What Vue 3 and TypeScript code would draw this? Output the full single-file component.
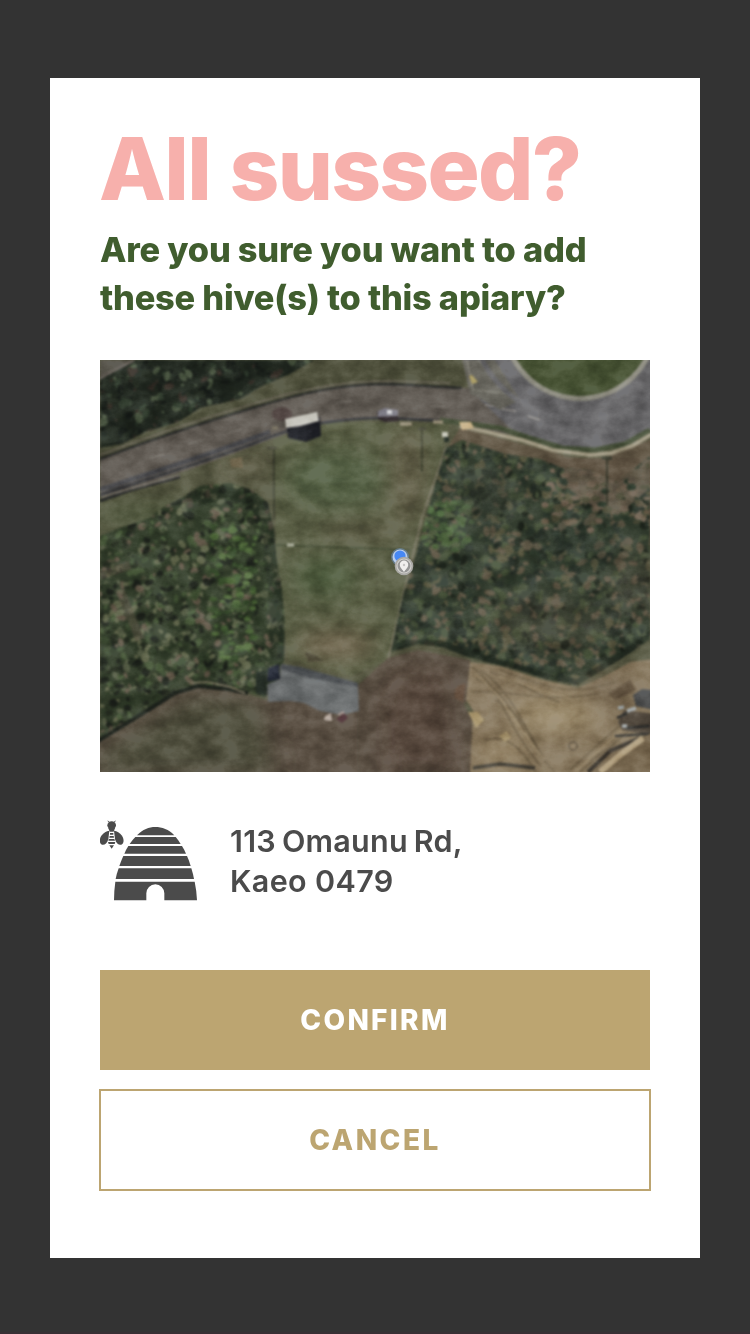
<script setup lang="ts">
interface Blob {
  x: number
  y: number
  rx: number
  ry: number
  a: number
  fill: string
}

function seeded(seed: number): () => number {
  let s = seed
  return () => {
    s = (s * 16807) % 2147483647
    return s / 2147483647
  }
}

function scatter(
  seed: number, count: number,
  x0: number, y0: number, x1: number, y1: number,
  rMin: number, rMax: number, colours: string[],
): Blob[] {
  const rnd = seeded(seed)
  return Array.from({ length: count }, () => {
    const r = rMin + rnd() * (rMax - rMin)
    return {
      x: Math.round((x0 + rnd() * (x1 - x0)) * 10) / 10,
      y: Math.round((y0 + rnd() * (y1 - y0)) * 10) / 10,
      rx: Math.round(r * 10) / 10,
      ry: Math.round(r * (0.45 + rnd() * 0.45) * 10) / 10,
      a: Math.round(rnd() * 180),
      fill: colours[Math.floor(rnd() * colours.length)],
    }
  })
}

const topTrees = scatter(77, 420, 0, 0, 215, 90, 1.5, 6, ['#1b211c', '#161b18', '#272f26', '#2f3b2e', '#20271f', '#332d27', '#46523f', '#181d19'])
const leftTrees = scatter(991, 1500, 0, 120, 190, 382, 1.5, 5.2, ['#262d22', '#2d3927', '#445538', '#545c46', '#3c4b33', '#5e5547', '#1d221c', '#5f654c', '#36402e', '#20261f'])
const rightTrees = scatter(4242, 1900, 290, 82, 555, 330, 1.8, 5.8, ['#2d382e', '#344032', '#445039', '#55543f', '#2c352d', '#5a5343', '#46513c', '#20271f', '#5e5747', '#272f28'])
const scrub = scatter(551, 120, 445, 88, 550, 170, 1.5, 5, ['#2b372b', '#6b5e4f', '#675b4d', '#4a4a38', '#625746'])
const brightLeft = scatter(314, 110, 112, 165, 156, 300, 1.5, 4.5, ['#405833', '#4a6338', '#364a2d', '#526b3f'])
const brightRight = scatter(629, 110, 322, 142, 372, 190, 1.5, 4.5, ['#4a603c', '#415538', '#567048', '#505c42'])
</script>

<template>
  <main class="screen">
    <section class="card">
      <h1 class="title">All sussed?</h1>
      <p class="question">
        <span class="line q1">Are you sure you want to add</span>
        <span class="line q2">these hive(s) to this apiary?</span>
      </p>

      <svg class="map" viewBox="0 0 550 412" preserveAspectRatio="none">
        <defs>
          <filter id="soft" x="0" y="0" width="100%" height="100%" color-interpolation-filters="sRGB"><feGaussianBlur stdDeviation="0.8" /></filter>
          <filter id="haze" x="-30%" y="-30%" width="160%" height="160%" color-interpolation-filters="sRGB"><feGaussianBlur stdDeviation="11" /></filter>
          <filter id="grain" x="0" y="0" width="100%" height="100%" color-interpolation-filters="sRGB">
            <feTurbulence type="fractalNoise" baseFrequency="0.043 0.057" numOctaves="5" seed="8" />
            <feColorMatrix type="matrix" values="1.8 0 0 0 -0.25  1.8 0 0 0 -0.27  1.8 0 0 0 -0.3  0 0 0 0 1" />
          </filter>
          <clipPath id="cTop"><path d="M0 0H214L190 14 162 26 140 39 100 48 78 62 45 72 22 84 0 88Z" /></clipPath>
          <clipPath id="cLeft"><path d="M0 176 20 168 50 158 62 148 85 136 100 126 130 123 152 130 168 143 174 170 176 196 182 230 185 265 184 300 178 318 165 338 148 332 126 327 98 325 75 334 45 353 0 382Z" /></clipPath>
          <clipPath id="cRight"><path d="M346 88 362 80 405 94 440 99 462 108 490 110 518 122 550 96V279L530 293 498 313 478 325 445 319 420 310 395 304 368 297 342 287 318 284 291 292 303 236 316 196 328 150Z" /></clipPath>
        </defs>
        <g filter="url(#soft)">
          <rect x="-5" y="-5" width="560" height="422" fill="#545642" />

          <path d="M0 88 80 62 210 0H370V26L230 26 130 54 0 98Z" fill="#4b4d3a" />
          <path d="M0 0H60L20 18 0 24Z" fill="#4f4c43" />
          <g clip-path="url(#cTop)">
            <rect width="220" height="90" fill="#202720" />
            <ellipse v-for="(b, i) in topTrees" :key="i" :cx="b.x" :cy="b.y" :rx="b.rx" :ry="b.ry" :fill="b.fill" :transform="`rotate(${b.a} ${b.x} ${b.y})`" />
          </g>
          <path d="M0 0H34L0 18Z" fill="#4c4a42" />
          <path d="M0 18 34 0" stroke="#5c5751" stroke-width="3" />

          <!-- centre paddock -->
          <path d="M174 80 230 62 350 64 326 150 303 240 288 300 250 316 188 300 184 260 176 190Z" fill="#565b43" />
          <g filter="url(#haze)" opacity=".85">
            <ellipse cx="235" cy="120" rx="50" ry="30" fill="#505e43" />
            <ellipse cx="225" cy="217" rx="34" ry="20" fill="#4a5a3d" />
            <ellipse cx="308" cy="115" rx="18" ry="50" fill="#645f4b" />
            <ellipse cx="262" cy="172" rx="48" ry="9" fill="#5f5c48" />
            <ellipse cx="236" cy="285" rx="40" ry="14" fill="#766853" />
            <ellipse cx="50" cy="155" rx="60" ry="10" fill="#4b573c" />
            <ellipse cx="145" cy="106" rx="30" ry="8" fill="#5e5a46" />
          </g>
          <path d="M176 185 255 188 310 190" stroke="#3a432f" stroke-width="1.5" fill="none" />
          <path d="M174 90V160M322 67V112" stroke="#373b2e" stroke-width="1.5" />
          <path d="M167 88H177M318 69H326" stroke="#494a3e" stroke-width="2" />
          <path d="M346 88 322 157 304 232 288 300" stroke="#74715f" stroke-width="2" fill="none" />
          <path d="M187 185H194" stroke="#a5a896" stroke-width="3" />

          <!-- road -->
          <path d="M0 99C50 80 120 57 180 40 220 29 250 24 290 24L370 28 440 80 345 62C275 54 225 59 180 76 110 103 50 124 0 138Z" fill="#5d5852" />
          <path d="M0 99C50 80 120 57 180 40 220 29 250 24 290 24L362 28" stroke="#2c2e2d" stroke-width="2.3" fill="none" />
          <path d="M0 95C50 76 120 53 180 36 220 26 250 21 290 21L350 23" stroke="#696459" stroke-width="1.5" fill="none" />
          <path d="M0 135C60 115 120 97 170 77 205 64 240 58 285 58L345 61" stroke="#34363a" stroke-width="2.6" fill="none" />
          <path d="M0 130C60 110 120 91 170 72" stroke="#45464a" stroke-width="5" fill="none" />
          <path d="M0 141 28 131 80 117" stroke="#26282a" stroke-width="2.5" fill="none" />
          <path d="M2 137 80 115" stroke="#716d65" stroke-width="2" />
          <path d="M50 98 65 94M88 84 103 80M128 73 142 69M235 43 252 41M330 46 345 47" stroke="#77736d" stroke-width="1.4" />

          <!-- roundabout -->
          <path d="M362 -4H554V68C535 80 515 88 490 89 455 88 428 79 410 68L375 35Z" fill="#626265" />
          <path d="M362 0H395L420 40 400 50 370 33Z" fill="#67665f" />
          <path d="M367 0 373 30 404 33 380 0M378 0 404 33" stroke="#85847b" stroke-width="1.6" fill="none" />
          <path d="M369 16 372 24 378 22 372 15Z" fill="#a89a62" />
          <path d="M382 0C400 35 435 58 480 60 515 59 535 48 550 34" stroke="#68686b" stroke-width="5" fill="none" />
          <circle cx="480" cy="-37" r="78" fill="#8c8b80" />
          <circle cx="480" cy="-37" r="73" fill="#424e31" />
          <path d="M402 49 416 51M428 56 440 60M385 45 394 46" stroke="#94918d" stroke-width="1.5" />
          <path d="M340 60 400 68 430 78 462 88 495 90 525 84 550 70" stroke="#414b36" stroke-width="5" fill="none" />

          <path d="M360 68 392 76 430 86 470 97 500 99 554 78V106L400 110 346 90Z" fill="#5f5545" />
          <path d="M360 66 392 73 425 81 452 90 490 95 512 93 532 86 552 74" stroke="#9d9681" stroke-width="4" fill="none" />
          <path d="M359 62H371L374 68 362 70Z" fill="#c3ac82" />
          <path d="M300 64H312M333 62H343" stroke="#9a937e" stroke-width="3.5" />
          <path d="M172 68H178" stroke="#76705f" stroke-width="3" />

          <!-- bush on both sides -->
          <g clip-path="url(#cLeft)">
            <rect y="110" width="200" height="280" fill="#303b2a" />
            <ellipse v-for="(b, i) in leftTrees" :key="i" :cx="b.x" :cy="b.y" :rx="b.rx" :ry="b.ry" :fill="b.fill" :transform="`rotate(${b.a} ${b.x} ${b.y})`" />
            <ellipse v-for="(b, i) in brightLeft" :key="`l${i}`" :cx="b.x" :cy="b.y" :rx="b.rx" :ry="b.ry" :fill="b.fill" />
            <path d="M85 145 120 132 150 138 168 160 176 240 178 300" stroke="#1f251e" stroke-width="14" fill="none" opacity=".4" />
            <path d="M0 215 30 205M20 230 40 280" stroke="#574d42" stroke-width="9" opacity=".45" />
          </g>
          <path d="M444 98H554V180H510L470 130Z" fill="#5c5142" />
          <g clip-path="url(#cRight)">
            <rect x="285" y="80" width="270" height="250" fill="#343e31" />
            <ellipse v-for="(b, i) in rightTrees" :key="i" :cx="b.x" :cy="b.y" :rx="b.rx" :ry="b.ry" :fill="b.fill" :transform="`rotate(${b.a} ${b.x} ${b.y})`" />
            <ellipse v-for="(b, i) in brightRight" :key="`r${i}`" :cx="b.x" :cy="b.y" :rx="b.rx" :ry="b.ry" :fill="b.fill" />
            <g filter="url(#haze)">
              <ellipse cx="388" cy="135" rx="28" ry="28" fill="#343b30" opacity=".6" />
              <ellipse cx="480" cy="180" rx="45" ry="24" fill="#252f29" opacity=".4" />
              <ellipse cx="450" cy="262" rx="60" ry="28" fill="#544d40" opacity=".3" />
              <ellipse cx="540" cy="225" rx="30" ry="30" fill="#5a5042" opacity=".3" />
            </g>
            <path d="M462 104 550 92V128L518 155 495 148 470 130Z" fill="#63584a" opacity=".8" />
            <ellipse v-for="(b, i) in scrub" :key="`s${i}`" :cx="b.x" :cy="b.y" :rx="b.rx" :ry="b.ry" :fill="b.fill" />
            <path d="M300 285 340 286 375 298 410 307 442 318 478 325 510 305 550 279" stroke="#1f271f" stroke-width="11" fill="none" opacity=".65" />
          </g>
          <path d="M507 98V146" stroke="#303329" stroke-width="1.8" />
          <path d="M502 98H512" stroke="#383b30" stroke-width="3" />
          <rect x="342" y="72" width="6" height="5" fill="#c5c6b9" />
          <rect x="344" y="77" width="5" height="5" fill="#222c25" />

          <!-- bare ground -->
          <path d="M-4 382 45 353 75 334 98 325 126 329 165 340 205 335 258 325 288 298 318 290 370 300 374 330 364 345 372 360 374 416H-4Z" fill="#564c41" />
          <g filter="url(#haze)">
            <path d="M-4 394 90 336 160 340 175 416H-4Z" fill="#4b4b3b" />
            <path d="M300 310 350 310 350 345 360 412H280V340Z" fill="#54463c" />
          </g>
          <path d="M-4 382 45 352 75 333 98 326 128 329 148 333" stroke="#1c211c" stroke-width="4" fill="none" />
          <path d="M90 323 108 322 130 327 145 333" stroke="#77705c" stroke-width="1.5" fill="none" />
          <path d="M370 302 400 306 440 319 478 328 505 316 530 302 554 299V416H370L373 350 366 340Z" fill="#83745c" />
          <g filter="url(#haze)">
            <ellipse cx="455" cy="355" rx="44" ry="18" fill="#978769" />
            <ellipse cx="402" cy="392" rx="26" ry="12" fill="#958467" />
            <ellipse cx="510" cy="330" rx="26" ry="12" fill="#6e604c" />
          </g>
          <path d="M372 307C400 325 405 365 440 405M380 310C412 330 425 370 447 403M390 312C424 322 430 334 460 342M372 332C400 328 445 345 500 333M395 340C430 355 430 390 455 412M470 410 520 365M480 412 530 370M490 400 515 384M376 318C400 330 410 345 425 372M400 310C440 325 470 338 515 322M385 380C410 372 425 395 436 412" stroke="#625541" stroke-width="1.5" fill="none" opacity=".75" />
          <path d="M375 315C405 335 412 362 445 400M398 316C430 325 440 332 470 338M475 412 525 367" stroke="#9c8c6f" stroke-width="1.4" fill="none" opacity=".8" />
          <path d="M368 352 378 352 384 360 376 368Z" fill="#a8966f" />
          <path d="M399 376 407 371 411 378 405 382Z" fill="#a59470" />
          <path d="M508 333 530 320 536 330 515 340Z" fill="#635543" />
          <path d="M533 335 542 329 554 330V350L536 346Z" fill="#464849" />
          <path d="M518 362 524 350 554 354V376L522 370Z" fill="#51493f" />
          <path d="M517 358 527 353M526 368 550 366M515 376 550 374" stroke="#272a2b" stroke-width="2" />
          <path d="M518 348 524 347M522 366 527 366M527 351 536 348" stroke="#a9afb0" stroke-width="3.5" />
          <path d="M488 412 509 391 554 372V416H488Z" fill="#75664f" />
          <path d="M488 412 510 391 540 378" stroke="#332f29" stroke-width="4" fill="none" />
          <path d="M500 412 520 395 543 378" stroke="#b09f80" stroke-width="6" fill="none" />
          <path d="M373 408 400 404 435 408" stroke="#45423a" stroke-width="3.5" fill="none" />
          <circle cx="473" cy="386" r="4" fill="#827258" stroke="#544a3b" stroke-width="1.5" />
          <path d="M355 338C353 329 357 325 366 323L363 343Z" fill="#5d493a" />

          <path d="M181 304 200 307 258 323 259 351 242 355 220 351 204 343 190 341 168 342 167 324 180 319Z" fill="#65696b" />
          <path d="M181 304 200 307 258 323V327L210 318 180 309Z" fill="#484c50" />
          <path d="M168 308 179 304 180 319 167 322Z" fill="#242936" />
          <path d="M156 312 167 310 166 336 156 333Z" fill="#28312a" />
          <path d="M205 292 215 295 224 301 208 302Z" fill="#4a4636" />
          <path d="M225 356 231 353 232 361 224 360Z" fill="#b8aca3" />
          <path d="M236 359 244 353 248 358 242 363Z" fill="#452a2e" />
          <path d="M238 355 244 352" stroke="#a2928b" stroke-width="2" />

          <!-- vehicles -->
          <ellipse cx="182" cy="54" rx="10" ry="7" fill="#4a3d3c" opacity=".8" />
          <path d="M186 63 220 57 221 76 206 82 188 78Z" fill="#1c1e24" />
          <path d="M185 59 217 52 219 61 200 66 186 68Z" fill="#c6c5bd" />
          <path d="M277 52H297L299 61 285 62 278 59Z" fill="#2b2529" />
          <path d="M278 51 285 48 298 50V56L278 57Z" fill="#777681" />
          <path d="M287 50H292V54H287Z" fill="#d0d1d4" />
          <path d="M130 99 142 97 143 108 131 107Z" fill="#75674f" opacity=".7" />
        </g>
        <rect class="grain" width="550" height="412" filter="url(#grain)" />

        <!-- position and pin -->
        <circle cx="300" cy="197" r="9" fill="#7299c9" opacity=".5" />
        <circle cx="300" cy="197" r="7.5" fill="#b9cdec" />
        <circle cx="300" cy="196" r="5.6" fill="#4688f4" />
        <circle cx="304" cy="206" r="9.3" fill="#aaa9a5" />
        <circle cx="304" cy="206" r="7" fill="#959594" stroke="#cfcecb" stroke-width="1.2" />
        <path d="M304 212C301 208 299.8 207 299.8 204.8A4.2 4.2 0 0 1 308.2 204.8C308.2 207 307 208 304 212Z" fill="#f0efed" />
        <circle cx="304" cy="205" r="1.2" fill="#c6c5c3" />
      </svg>

      <div class="place">
        <svg class="hive" viewBox="30 24 300 252">
          <g fill="#4b4b4b">
            <path d="M141 76C158 58 177 51 196 51S237 58 253 76Z" />
            <path d="M136 81H257Q266 91 272 102H119Q126 91 136 81Z" />
            <path d="M115 108H276Q283 119 288 131H103Q108 119 115 108Z" />
            <path d="M100 138H291Q298 153 302 168H88Q93 153 100 138Z" />
            <path d="M86 175H304Q309 191 312 207H77Q80 191 86 175Z" />
            <path d="M76 215H314Q320 243 321 271H223V250A27 27 0 0 0 169 250V271H72Q72 243 76 215Z" />
            <ellipse cx="65" cy="46" rx="13" ry="12" />
            <path d="M55 54H75L71 65H59Z" />
            <path d="M58 62 55 88C51 101 43 106 36 104 27 100 28 86 34 77 41 68 49 63 58 62Z" />
            <path d="M72 62 75 88C79 101 87 106 94 104 103 100 102 86 96 77 89 68 81 63 72 62Z" />
            <path d="M60 69H70V74H60ZM59 78H71L72 83H58ZM57 87H73L75 92H55ZM54 96H76L74 102H56ZM58 106H72L65 116Z" />
          </g>
          <path d="M59 40Q59 34 53 33M71 40Q71 34 77 33" fill="none" stroke="#4b4b4b" stroke-width="2.5" />
        </svg>
        <address class="address">
          <span class="line a1">113 Omaunu Rd,</span>
          <span class="line a2">Kaeo 0479</span>
        </address>
      </div>

      <button class="button confirm" type="button">CONFIRM</button>
      <button class="button cancel" type="button">CANCEL</button>
    </section>
  </main>
</template>

<style>
body {
  background: #333333;
}
</style>

<style scoped>
.screen {
  box-sizing: border-box;
  width: 750px;
  height: 1334px;
  padding: 78px 50px 0;
  background: #333333;
  border-bottom: 2px solid #382f34;
  font-family: Inter, "Liberation Sans", sans-serif;
}
.card {
  box-sizing: border-box;
  display: flex;
  flex-direction: column;
  height: 1180px;
  padding: 41px 50px 0;
  background: #ffffff;
}
.title {
  margin: 0 0 0 -1px;
  font-size: 87px;
  line-height: 100px;
  font-weight: 800;
  letter-spacing: -1.7px;
  word-spacing: 2px;
  white-space: nowrap;
  color: #f7b0ac;
}
.question {
  margin: 7px 0 0;
  font-size: 34.4px;
  line-height: 48px;
  font-weight: 800;
  color: #405d2e;
}
.line {
  display: block;
  white-space: nowrap;
}
.q1 {
  letter-spacing: -0.2px;
}
.q2 {
  letter-spacing: -0.22px;
}
.map {
  display: block;
  flex: none;
  width: 550px;
  height: 412px;
  margin-top: 38px;
}
.grain {
  mix-blend-mode: soft-light;
  opacity: 0.3;
}
.place {
  display: flex;
  gap: 30px;
  margin-top: 46px;
}
.hive {
  width: 100px;
  height: 84px;
}
.address {
  margin-top: 3px;
  font-size: 30.5px;
  line-height: 40px;
  font-style: normal;
  font-weight: 600;
  color: #4b4b4b;
}
.a1 {
  letter-spacing: 0.25px;
  word-spacing: -2px;
}
.a2 {
  letter-spacing: 0.35px;
}
.button {
  box-sizing: border-box;
  height: 100px;
  padding: 0;
  border: 0;
  font-family: inherit;
  font-size: 28px;
  font-weight: 800;
  letter-spacing: 2.3px;
}
.confirm {
  margin-top: 68px;
  background: #bca571;
  color: #ffffff;
}
.cancel {
  height: 102px;
  margin: 19px -1px 0;
  border: 2px solid #bca571;
  background: #ffffff;
  color: #bca571;
  letter-spacing: 2.5px;
}
</style>
